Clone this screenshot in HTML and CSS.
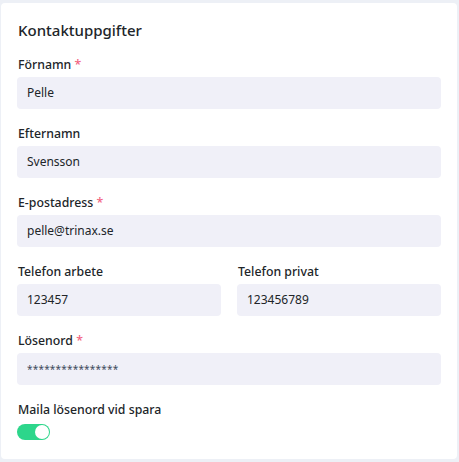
FILE: index.html
```html
<!DOCTYPE html>
<html lang="sv">
<head>
  <meta charset="UTF-8" />
  <meta name="viewport" content="width=device-width, initial-scale=1.0" />
  <title>Kontaktuppgifter</title>
  <link rel="stylesheet" href="styles.css">
</head>
<body>
  <div class="kort">
    <h2>Kontaktuppgifter</h2>

    <div class="falt">
      <label>Förnamn <span class="krav">*</span></label>
      <div class="inmatning">Pelle</div>
    </div>

    <div class="falt">
      <label>Efternamn</label>
      <div class="inmatning">Svensson</div>
    </div>

    <div class="falt">
      <label>E-postadress <span class="krav">*</span></label>
      <div class="inmatning">pelle@trinax.se</div>
    </div>

    <div class="rad">
      <div class="falt">
        <label>Telefon arbete</label>
        <div class="inmatning">123457</div>
      </div>
      <div class="falt">
        <label>Telefon privat</label>
        <div class="inmatning">123456789</div>
      </div>
    </div>

    <div class="falt">
      <label>Lösenord <span class="krav">*</span></label>
      <div class="inmatning losen">****************</div>
    </div>

    <div class="falt">
      <label>Maila lösenord vid spara</label>
      <div class="reglage"><span class="knopp"></span></div>
    </div>
  </div>
</body>
</html>
```

FILE: styles.css
```css
body {
  font-family: "Noto Sans", "Open Sans", sans-serif;
  background: #edf0f6;
  margin: 0;
  padding: 3px 2px 3px 1px;
  color: #212529;
}

.kort {
  background: white;
  border-radius: 4px;
  padding: 16px 16px 19px 16px;
  height: 456px;
  box-sizing: border-box;
  display: flex;
  flex-direction: column;
  gap: 15px;
}

h2 {
  font-size: 15px;
  font-weight: 500;
  line-height: 22px;
  margin: 0 0 -1px 1px;
}

.falt {
  display: flex;
  flex-direction: column;
}

label {
  font-size: 12.3px;
  font-weight: 500;
  line-height: 20px;
  margin: 0 0 2px 1px;
}

.krav { color: #f2647f; }

.inmatning {
  background: #f0f0f8;
  border-radius: 4px;
  height: 32px;
  line-height: 32px;
  padding: 0 10px;
  font-size: 12px;
}

.losen {
  font-size: 10px;
  letter-spacing: 0.2px;
  color: #3d4a5c;
}

.rad {
  display: grid;
  grid-template-columns: 1fr 1fr;
  gap: 16px;
}

.reglage {
  width: 33px;
  height: 16px;
  border-radius: 8px;
  background: #2dd68b;
  display: flex;
  justify-content: flex-end;
  align-items: center;
  padding: 0 1px;
  box-sizing: border-box;
  margin-top: 2px;
}

.knopp {
  width: 14px;
  height: 14px;
  border-radius: 50%;
  background: white;
}
```
